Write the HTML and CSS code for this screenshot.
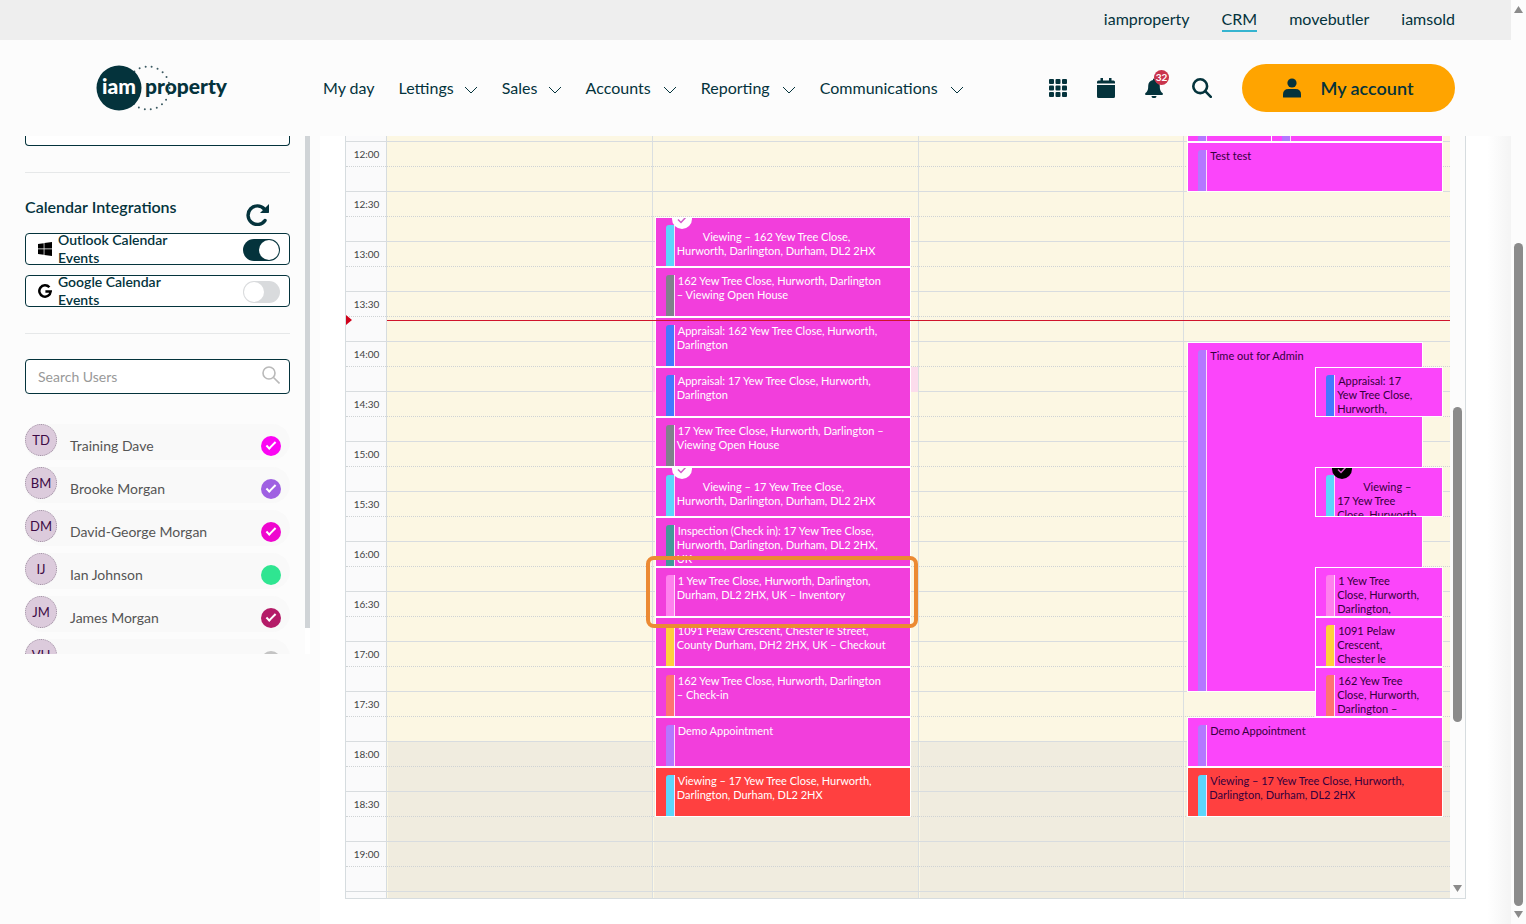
FILE: index.html
```
<!DOCTYPE html>
<html lang="en">

<head>
    <meta charset="UTF-8">
    <meta name="viewport" content="width=device-width, initial-scale=1.0">
    <title>iamproperty CRM - Calendar</title>
    <link rel="stylesheet" href="styles.css">
</head>

<body>
    <div class="page">
        <nav class="topbar">
            <a href="#">iamproperty</a>
            <a href="#" class="active">CRM</a>
            <a href="#">movebutler</a>
            <a href="#">iamsold</a>
        </nav>

        <header class="header">
            <a href="#" class="logo" aria-label="iamproperty">
                <svg width="132" height="48" viewBox="0 0 132 48">
                    <circle cx="52" cy="24" r="21.5" fill="none" stroke="#3c5a62" stroke-width="2" stroke-linecap="round" stroke-dasharray="0 6.14" />
                    <circle cx="23" cy="24" r="22.5" fill="#04333c" />
                    <text x="6" y="30" class="logo-text" fill="#fff">iam</text>
                    <text x="49" y="30" class="logo-text" fill="#04333c">property</text>
                </svg>
            </a>
            <nav class="main-nav">
                <a href="#">My day</a>
                <a href="#">Lettings <svg class="chev" viewBox="0 0 14 8"><path d="M1 1l6 6 6-6" /></svg></a>
                <a href="#">Sales <svg class="chev" viewBox="0 0 14 8"><path d="M1 1l6 6 6-6" /></svg></a>
                <a href="#">Accounts <svg class="chev" viewBox="0 0 14 8"><path d="M1 1l6 6 6-6" /></svg></a>
                <a href="#">Reporting <svg class="chev" viewBox="0 0 14 8"><path d="M1 1l6 6 6-6" /></svg></a>
                <a href="#">Communications <svg class="chev" viewBox="0 0 14 8"><path d="M1 1l6 6 6-6" /></svg></a>
            </nav>
            <div class="tools">
                <button class="tool" aria-label="Apps">
                    <svg width="20" height="20" viewBox="0 0 20 20">
                        <rect x="1" y="1" width="5" height="5" rx="1" /><rect x="7.5" y="1" width="5" height="5" rx="1" /><rect x="14" y="1" width="5" height="5" rx="1" />
                        <rect x="1" y="7.5" width="5" height="5" rx="1" /><rect x="7.5" y="7.5" width="5" height="5" rx="1" /><rect x="14" y="7.5" width="5" height="5" rx="1" />
                        <rect x="1" y="14" width="5" height="5" rx="1" /><rect x="7.5" y="14" width="5" height="5" rx="1" /><rect x="14" y="14" width="5" height="5" rx="1" />
                    </svg>
                </button>
                <button class="tool" aria-label="Calendar">
                    <svg width="20" height="20" viewBox="0 0 20 20">
                        <path d="M1 5.500V4q0-1.500 1.500-1.500H4.500V0H7v2.500h6V0h2.500v2.500h2Q19 2.500 19 4v1.500zM1 7h18v11.500q0 1.500-1.500 1.500h-15Q1 20 1 18.500z" />
                    </svg>
                </button>
                <button class="tool" aria-label="Notifications">
                    <svg width="20" height="20" viewBox="0 0 20 20">
                        <path d="M9 1.500a1 1 0 0 1 2 0v.6c3 .5 4.800 2.700 4.800 5.800 0 4.200 1 5.600 2.700 7.100.8.9.3 2-.8 2H2.300c-1.100 0-1.600-1.100-.8-2 1.700-1.500 2.700-2.900 2.700-7.100C4.200 4.800 6 2.600 9 2.100zM7.500 18h5a2.500 2.200 0 0 1-5 0z" />
                    </svg>
                    <span class="count">32</span>
                </button>
                <button class="tool" aria-label="Search">
                    <svg width="20" height="20" viewBox="0 0 20 20" fill="none" stroke="#04333c" stroke-width="2.600" stroke-linecap="round">
                        <circle cx="8.200" cy="8.200" r="6.900" /><path d="M13.200 13.200l5.600 5.600" />
                    </svg>
                </button>
            </div>
            <button class="account">
                <svg width="18" height="20" viewBox="0 0 18 20">
                    <circle cx="9" cy="5" r="4.600" /><path d="M0 19v-2.500Q0 11 5.500 11h7Q18 11 18 16.500V19q0 .6-.6.6H.6Q0 19.600 0 19z" />
                </svg>
                My account
            </button>
        </header>

        <div class="content">
            <aside class="sidebar">
                <div class="panel">
                    <div class="box-end"></div>
                    <hr>
                    <div class="title-row">
                        <h2>Calendar Integrations</h2>
                        <button class="refresh" aria-label="Refresh">
                            <svg width="24" height="24" viewBox="0 0 24 24">
                                <path d="M19 18.500A9.300 9.300 0 1 1 18.300 7" fill="none" stroke="#04333c" stroke-width="3.400" stroke-linecap="round" />
                                <path d="M23 2v8.300q0 .7-.7.700h-8.300z" fill="#04333c" />
                            </svg>
                        </button>
                    </div>
                    <div class="integration">
                        <svg width="14" height="14" viewBox="0 0 14 14"><path d="M0 2l5.700-.8v5.400H0zM6.400 1.100L14 0v6.600H6.400zM0 7.300h5.700v5.400L0 12zM6.400 7.300H14V14l-7.600-1.100z" /></svg>
                        <label for="outlook">Outlook Calendar Events</label>
                        <input type="checkbox" class="switch" id="outlook" checked>
                    </div>
                    <div class="integration">
                        <svg width="14" height="14" viewBox="0 0 14 14"><path d="M11.400 3.300A5.700 5.700 0 1 0 12.700 7.500H7.400" fill="none" stroke="#000" stroke-width="2.500" /></svg>
                        <label for="google">Google Calendar Events</label>
                        <input type="checkbox" class="switch" id="google">
                    </div>
                    <hr>
                    <div class="search">
                        <input type="text" placeholder="Search Users" aria-label="Search Users">
                        <svg width="18" height="18" viewBox="0 0 18 18" fill="none" stroke="#b9b9b9" stroke-width="1.600"><circle cx="7" cy="7" r="6" /><path d="M11.500 11.500l6 6" /></svg>
                    </div>
                    <ul class="users">
                        <li><span class="avatar">TD</span><label for="u1">Training Dave</label><input type="checkbox" id="u1" class="magenta" checked></li>
                        <li><span class="avatar">BM</span><label for="u2">Brooke Morgan</label><input type="checkbox" id="u2" class="violet" checked></li>
                        <li><span class="avatar">DM</span><label for="u3">David-George Morgan</label><input type="checkbox" id="u3" class="rose" checked></li>
                        <li><span class="avatar">IJ</span><label for="u4">Ian Johnson</label><input type="checkbox" id="u4" class="mint"></li>
                        <li><span class="avatar">JM</span><label for="u5">James Morgan</label><input type="checkbox" id="u5" class="berry" checked></li>
                        <li><span class="avatar">VH</span><label for="u6"></label><input type="checkbox" id="u6" class="grey"></li>
                    </ul>
                </div>
                <div class="side-scroll"><div class="side-thumb"></div></div>
            </aside>

            <main class="main">
                <div class="calendar">
                    <div class="timegrid">
                        <!-- column backgrounds -->
                        <div class="layer cols">
                            <div class="axis"></div>
                            <div class="col"><div class="off"></div></div>
                            <div class="col"><div class="off"></div></div>
                            <div class="col"><div class="off"></div></div>
                            <div class="col"><div class="off"></div></div>
                        </div>

                        <!-- half hour lines -->
                        <div class="layer slots">
                            <div class="slot first"></div>
                            <div class="slot"><span>12:00</span></div>
                            <div class="slot"><span>12:30</span></div>
                            <div class="slot"><span>13:00</span></div>
                            <div class="slot"><span>13:30</span></div>
                            <div class="slot"><span>14:00</span></div>
                            <div class="slot"><span>14:30</span></div>
                            <div class="slot"><span>15:00</span></div>
                            <div class="slot"><span>15:30</span></div>
                            <div class="slot"><span>16:00</span></div>
                            <div class="slot"><span>16:30</span></div>
                            <div class="slot"><span>17:00</span></div>
                            <div class="slot"><span>17:30</span></div>
                            <div class="slot"><span>18:00</span></div>
                            <div class="slot"><span>18:30</span></div>
                            <div class="slot"><span>19:00</span></div>
                            <div class="slot"></div>
                        </div>

                        <!-- events -->
                        <div class="layer cols">
                            <div></div>
                            <div class="events"></div>
                            <div class="events dave">
                                <div class="tint"></div>
                                <article class="event t1245 viewing"><i class="bar cyan"></i><svg class="tick" width="20" height="20" viewBox="0 0 20 20"><circle cx="10" cy="10" r="10" fill="#fff" /><path d="M6 10.500l3 3 5-5.500" /></svg><p>Viewing – 162 Yew Tree Close,<br>Hurworth, Darlington, Durham, DL2 2HX</p></article>
                                <article class="event t1315"><i class="bar slate"></i><p>162 Yew Tree Close, Hurworth, Darlington<br>– Viewing Open House</p></article>
                                <article class="event t1345"><i class="bar blue"></i><p>Appraisal: 162 Yew Tree Close, Hurworth,<br>Darlington</p></article>
                                <article class="event t1415"><i class="bar blue"></i><p>Appraisal: 17 Yew Tree Close, Hurworth,<br>Darlington</p></article>
                                <article class="event t1445"><i class="bar slate"></i><p>17 Yew Tree Close, Hurworth, Darlington –<br>Viewing Open House</p></article>
                                <article class="event t1515 viewing"><i class="bar cyan"></i><svg class="tick" width="20" height="20" viewBox="0 0 20 20"><circle cx="10" cy="10" r="10" fill="#fff" /><path d="M6 10.500l3 3 5-5.500" /></svg><p>Viewing – 17 Yew Tree Close,<br>Hurworth, Darlington, Durham, DL2 2HX</p></article>
                                <article class="event t1545"><i class="bar teal"></i><p>Inspection (Check in): 17 Yew Tree Close,<br>Hurworth, Darlington, Durham, DL2 2HX,<br>UK</p></article>
                                <article class="event t1615"><i class="bar pink"></i><p>1 Yew Tree Close, Hurworth, Darlington,<br>Durham, DL2 2HX, UK – Inventory</p></article>
                                <article class="event t1645"><i class="bar yellow"></i><p>1091 Pelaw Crescent, Chester le Street,<br>County Durham, DH2 2HX, UK – Checkout</p></article>
                                <article class="event t1715"><i class="bar salmon"></i><p>162 Yew Tree Close, Hurworth, Darlington<br>– Check-in</p></article>
                                <article class="event t1745"><i class="bar purple"></i><p>Demo Appointment</p></article>
                                <article class="event t1815 red"><i class="bar cyan"></i><p>Viewing – 17 Yew Tree Close, Hurworth,<br>Darlington, Durham, DL2 2HX</p></article>
                                <div class="highlight"></div>
                            </div>
                            <div class="events"></div>
                            <div class="events admin">
                                <article class="event before left"><i class="bar purple"></i></article>
                                <article class="event before right"><i class="bar purple"></i></article>
                                <article class="event t1200"><i class="bar purple"></i><p>Test test</p></article>
                                <article class="event t1400 long"><i class="bar purple"></i><p>Time out for Admin</p></article>
                                <article class="event t1415 half"><i class="bar blue"></i><p>Appraisal: 17<br>Yew Tree Close,<br>Hurworth,</p></article>
                                <article class="event t1515 half viewing"><i class="bar cyan"></i><svg class="tick" width="20" height="20" viewBox="0 0 20 20"><circle cx="10" cy="10" r="10" fill="#000" /><path d="M6 10.500l3 3 5-5.500" /></svg><p>Viewing –<br>17 Yew Tree<br>Close, Hurworth,</p></article>
                                <article class="event t1615 half"><i class="bar pink"></i><p>1 Yew Tree<br>Close, Hurworth,<br>Darlington,</p></article>
                                <article class="event t1645 half"><i class="bar yellow"></i><p>1091 Pelaw<br>Crescent,<br>Chester le</p></article>
                                <article class="event t1715 half"><i class="bar salmon"></i><p>162 Yew Tree<br>Close, Hurworth,<br>Darlington –</p></article>
                                <article class="event t1745"><i class="bar purple"></i><p>Demo Appointment</p></article>
                                <article class="event t1815 red"><i class="bar cyan"></i><p>Viewing – 17 Yew Tree Close, Hurworth,<br>Darlington, Durham, DL2 2HX</p></article>
                            </div>
                        </div>

                        <div class="layer now"><div class="now-arrow"></div><div class="now-line"></div></div>
                    </div>
                    <div class="cal-scroll">
                        <div class="cal-thumb"></div>
                        <svg width="9" height="7" viewBox="0 0 9 7"><path d="M0 0h9L4.500 7z" /></svg>
                    </div>
                </div>
            </main>
        </div>
    </div>

    <div class="page-scroll">
        <svg width="9" height="7" viewBox="0 0 9 7"><path d="M0 7h9L4.500 0z" /></svg>
        <div class="page-thumb"></div>
        <svg width="9" height="7" viewBox="0 0 9 7"><path d="M0 0h9L4.500 7z" /></svg>
    </div>
</body>

</html>
```
FILE: styles.css
```
* {
    box-sizing: border-box;
}

body {
    margin: 0;
    display: flex;
    height: 100vh;
    overflow: hidden;
    font-family: Lato, "Open Sans", sans-serif;
    font-size: 16px;
    color: #04333c;
    background-color: #fcfcfc;
}

a {
    color: inherit;
    text-decoration: none;
}

button {
    font-family: inherit;
    color: inherit;
    border: 0;
    padding: 0;
    background: none;
    cursor: pointer;
}

.page {
    flex: 1;
    min-width: 0;
    display: flex;
    flex-direction: column;
}

/* top bar */
.topbar {
    height: 40px;
    display: flex;
    justify-content: flex-end;
    align-items: center;
    gap: 32px;
    padding-right: 56px;
    background-color: #eeeeee;
}

.topbar a {
    height: 24px;
    line-height: 22px;
    border-bottom: 2px solid transparent;
}

.topbar a.active {
    border-bottom-color: #35b4d0;
}

/* header */
.header {
    height: 96px;
    display: flex;
    align-items: center;
    padding: 0 56px 0 96px;
}

.logo {
    width: 132px;
    height: 48px;
    margin-right: 95px;
}

.logo-text {
    font-size: 21px;
    font-weight: 900;
}

.main-nav {
    display: flex;
    gap: 24px;
    padding-bottom: 2px;
    white-space: nowrap;
}

.chev {
    width: 14px;
    height: 8px;
    margin-left: 6px;
    fill: none;
    stroke: #04333c;
    stroke-width: 1;
}

.main-nav a:nth-child(n+4) .chev {
    margin-left: 8px;
}

.tools {
    display: flex;
    gap: 28px;
    margin-left: auto;
    margin-right: 30px;
}

.tool {
    position: relative;
    width: 20px;
    height: 20px;
    fill: #04333c;
}

.tool svg {
    display: block;
}

.count {
    position: absolute;
    top: -8px;
    left: 10px;
    width: 15px;
    height: 15px;
    border-radius: 50%;
    background-color: #c9344c;
    color: #fff;
    font-size: 10px;
    font-weight: 700;
    line-height: 15px;
}

.account {
    display: flex;
    align-items: center;
    justify-content: center;
    gap: 19px;
    width: 213px;
    height: 48px;
    border-radius: 24px;
    background-color: #ffa400;
    font-size: 18px;
    font-weight: 600;
    fill: #04333c;
}

/* sidebar */
.content {
    flex: 1;
    min-height: 0;
    display: flex;
}

.sidebar {
    width: 320px;
    height: calc(100vh - 406px);
    display: flex;
    overflow: hidden;
}

.panel {
    width: 305px;
    padding: 0 15px 0 25px;
}

.box-end {
    height: 10px;
    border: 1px solid #04333c;
    border-top: 0;
    border-radius: 0 0 4px 4px;
    background-color: #fff;
}

hr {
    height: 1px;
    margin: 26px 0 25px;
    border: 0;
    background-color: #e6e8e9;
}

.title-row {
    display: flex;
    justify-content: space-between;
    padding-right: 20px;
    height: 35px;
}

.title-row h2 {
    margin: 0;
    font-size: 16px;
    font-weight: 600;
    line-height: 18px;
}

.refresh {
    height: 35px;
}

.integration {
    display: flex;
    align-items: center;
    height: 32px;
    margin-bottom: 10px;
    padding: 0 9px 0 12px;
    border: 1px solid #04333c;
    border-radius: 4px;
    background-color: #fff;
}

.integration label {
    width: 130px;
    margin-left: 6px;
    font-size: 14px;
    font-weight: 600;
    line-height: 18px;
}

.switch {
    appearance: none;
    width: 37px;
    height: 22px;
    margin: 1px 0 0 auto;
    border-radius: 11px;
    background-color: #d9dbdd;
}

.switch::before {
    content: "";
    display: block;
    width: 20px;
    height: 20px;
    margin: 1px;
    border-radius: 50%;
    background-color: #fff;
}

.switch:checked {
    background-color: #04333c;
}

.switch:checked::before {
    margin-left: 16px;
}

.search {
    display: flex;
    align-items: center;
    height: 35px;
    margin-bottom: 30px;
    padding: 0 9px 0 12px;
    border: 1px solid #04333c;
    border-radius: 4px;
    background-color: #fff;
}

.search svg {
    margin-bottom: 4px;
}

.search input {
    flex: 1;
    min-width: 0;
    padding: 0;
    border: 0;
    outline: 0;
    font-family: inherit;
    font-size: 14px;
}

.search input::placeholder {
    color: #999;
}

.users {
    margin: 0;
    padding: 0;
    list-style: none;
}

.users li {
    display: flex;
    height: 36px;
    margin-bottom: 7px;
    padding-right: 9px;
    border-radius: 18px;
    background-color: #f9f9f9;
}

.avatar {
    width: 32px;
    height: 32px;
    border: 1px dotted #9d8fa0;
    border-radius: 50%;
    background-color: #dccbdc;
    color: #3c0a45;
    font-size: 13px;
    line-height: 30px;
    text-align: center;
}

.users label {
    flex: 1;
    margin-left: 13px;
    font-size: 14px;
    line-height: 44px;
    color: #555;
}

.users input {
    appearance: none;
    width: 20px;
    height: 20px;
    margin: 12px 0 0;
    border-radius: 50%;
}

.users input:checked::before {
    content: "";
    display: block;
    width: 10px;
    height: 5px;
    margin: 6px 5px;
    box-sizing: border-box;
    border-left: 2px solid #fff;
    border-bottom: 2px solid #fff;
    transform: rotate(-45deg);
}

.magenta { background-color: #fb05f3; }
.violet { background-color: #9f60e2; }
.rose { background-color: #ef06cf; }
.mint { background-color: #2fe591; }
.berry { background-color: #b41c68; }
.grey { background-color: #c4c4c4; }

.side-scroll {
    width: 5px;
    background-color: #fff;
}

.side-thumb {
    height: 95%;
    background-color: #d0d4d7;
}

/* calendar */
.main {
    flex: 1;
    min-width: 0;
    padding: 0 45px 25px 25px;
    background: linear-gradient(to right, #fff 98%, #f4f4f4);
}

.calendar {
    display: flex;
    height: 100%;
    border: 1px solid #d6dcdf;
    border-top: 0;
}

.timegrid {
    flex: 1;
    min-width: 0;
    display: grid;
    overflow: hidden;
}

.layer {
    grid-area: 1 / 1;
    min-width: 0;
    min-height: 0;
}

.cols {
    display: grid;
    grid-template-columns: 41px repeat(4, 1fr);
}

.axis {
    background-color: #fafafb;
    border-right: 1px solid #d6dcdf;
}

.col,
.events,
.now {
    display: grid;
    grid-template-rows: 6px repeat(31, 25px);
}

.col {
    background-color: #fcf7e3;
    border-right: 1px solid #dadfe1;
}

.col:last-child {
    border-right: 0;
}

.off {
    grid-row: 26 / 33;
    margin-left: 1px;
    background-color: #f0ecdf;
}

.slot {
    display: grid;
    grid-template-rows: 25px;
    height: 50px;
    border-bottom: 1px solid #d8dcdf;
}

.slot::before {
    content: "";
    grid-area: 1 / 1;
    border-bottom: 1px dotted #cfd3d5;
}

.slot.first {
    height: 6px;
}

.slot.first::before {
    display: none;
}

.slot span {
    grid-area: 1 / 1;
    width: 41px;
    font-size: 10px;
    line-height: 25px;
    text-align: center;
    color: #444;
}

.events {
    position: relative;
    grid-template-columns: 1fr 1fr;
    padding: 0 8px 0 3px;
}

.events.dave {
    padding-right: 9px;
}

.events.admin {
    padding-left: 4px;
}

.event {
    position: relative;
    grid-column: 1 / 3;
    display: flex;
    margin: 1px 0;
    overflow: hidden;
    box-shadow: 0 0 0 1px #fff;
    font-size: 11px;
    line-height: 14px;
    white-space: nowrap;
}

.event p {
    margin: 6px 0 0 2px;
    text-indent: 1px;
}

.dave .event {
    background-color: #f23edc;
    color: #fff;
}

.admin .event {
    background-color: #fb45fa;
    color: #35003c;
}

.events .red {
    background-color: #ff4040;
}

.event.viewing p {
    padding-top: 6px;
    text-indent: 26px;
}

.event.half {
    grid-column: 2;
    margin-left: 1px;
}

.event.long {
    margin-right: 20px;
}

.tick {
    position: absolute;
    top: -9px;
    left: 16px;
}

.tick path {
    fill: none;
    stroke: #d25cc8;
    stroke-width: 1.5;
}

.bar {
    flex: none;
    width: 9px;
    margin: 7px 0 0 10px;
    border-right: 1px solid #ffd9fb;
    border-radius: 3px 0 0 0;
}

.cyan { background-color: #5cd6fb; }
.slate { background-color: #80808c; }
.blue { background-color: #4478ff; }
.teal { background-color: #429a98; }
.pink { background-color: #ff80ee; }
.yellow { background-color: #ffd03c; }
.salmon { background-color: #ff7272; }
.purple { background-color: #b477ff; }

.t1200 { grid-row: 2 / 4; }
.t1245 { grid-row: 5 / 7; }
.t1315 { grid-row: 7 / 9; }
.t1345 { grid-row: 9 / 11; }
.t1400 { grid-row: 10 / 24; }
.t1415 { grid-row: 11 / 13; }
.t1445 { grid-row: 13 / 15; }
.t1515 { grid-row: 15 / 17; }
.t1545 { grid-row: 17 / 19; }
.t1615 { grid-row: 19 / 21; }
.t1645 { grid-row: 21 / 23; }
.t1715 { grid-row: 23 / 25; }
.t1745 { grid-row: 25 / 27; }
.t1815 { grid-row: 27 / 29; }

.before {
    grid-row: 1;
    margin: 0 0 1px;
}

.before .bar {
    margin-top: 0;
    border-radius: 0;
}

.before.left {
    grid-column: 1 / 3;
}

.before.right {
    grid-column: 1 / 3;
    margin-left: 33%;
}

.tint {
    grid-row: 11;
    grid-column: 1 / 3;
    margin: 0 -8px 0 -3px;
    background-color: #fcdcec;
}

.highlight {
    grid-row: 19 / 21;
    grid-column: 1 / 3;
    z-index: 2;
    margin: -11px -8px -11px -10px;
    border: 4px solid #ec8a33;
    border-radius: 8px;
}

.now {
    grid-template-columns: 41px 1fr;
    z-index: 3;
}

.now-arrow {
    grid-row: 9;
    width: 0;
    height: 10px;
    margin-top: -2px;
    border: 5px solid transparent;
    border-left: 6px solid #d0021b;
    border-right: 0;
}

.now-line {
    grid-row: 9;
    grid-column: 2;
    height: 1px;
    margin-top: 3px;
    background-color: #d0142c;
}

/* scrollbars */
.cal-scroll,
.page-scroll {
    display: flex;
    flex-direction: column;
    align-items: center;
    width: 15px;
    background-color: #fcfcfc;
    fill: #8b8b8b;
}

.cal-scroll {
    padding-bottom: 6px;
}

.cal-thumb {
    width: 9px;
    height: 315px;
    margin: 271px 0 auto;
    border-radius: 5px;
    background-color: #8b8b8b;
}

.page-scroll {
    padding: 6px 0;
}

.page-thumb {
    flex: 1;
    width: 9px;
    margin: 230px 0 5px;
    border-radius: 5px;
    background-color: #8b8b8b;
}
```
